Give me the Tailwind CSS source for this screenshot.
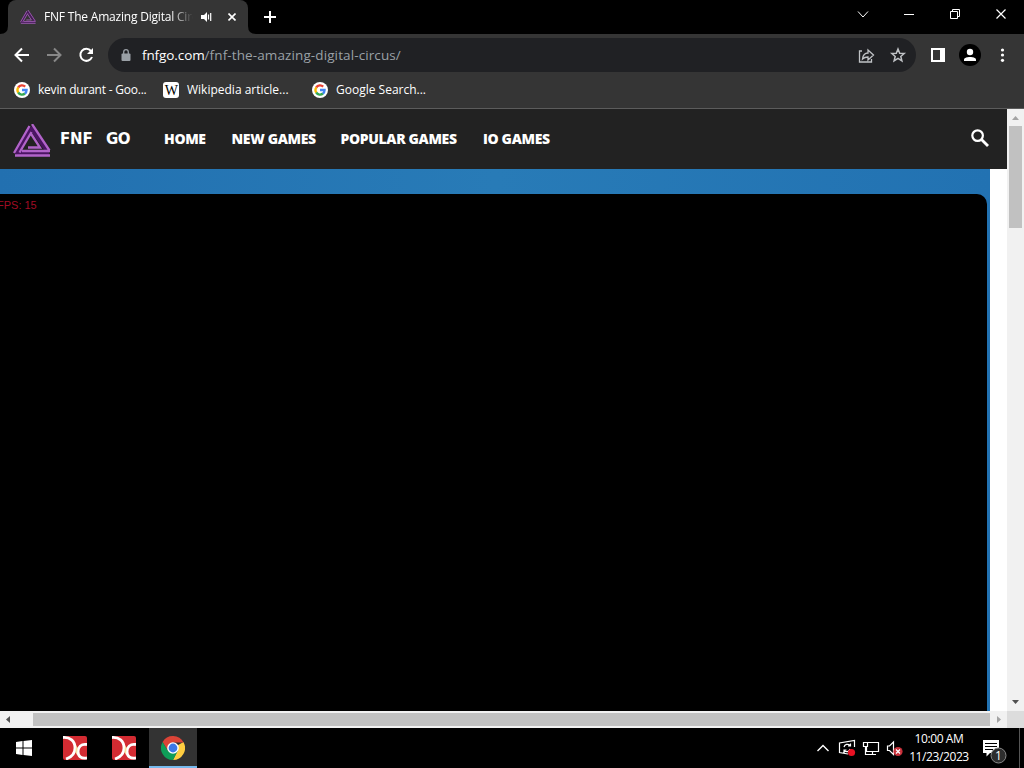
<!DOCTYPE html>
<html lang="en">
  <head>
    <meta charset="UTF-8" />
    <meta name="viewport" content="width=device-width, initial-scale=1.0" />
    <title>FNF The Amazing Digital Circus</title>
    <script src="https://cdn.jsdelivr.net/npm/@tailwindcss/browser@4"></script>
  </head>
  <body class="bg-black overflow-hidden">
    <!-- Shared shapes -->
    <svg class="hidden">
      <symbol id="logo" viewBox="0 0 38 33">
        <g fill="none">
          <path d="M17 4L3 30M18 3L35 27M5 29H36" stroke="#4b1463" stroke-width="5" />
          <path d="M16.5 2L1 29M18.5 8L6.5 28.5M19 0L36.5 26.5M17.5 9L27 23.5H15M9 27H37M2 31.5H37" stroke="#b163c9" stroke-width="2.3" />
        </g>
      </symbol>
      <symbol id="google" viewBox="0 0 16 16">
        <circle cx="8" cy="8" r="8" fill="#fff" />
        <g fill="none" stroke-width="2.3">
          <path d="M4.2 5.5A4.6 4.6 0 0 1 11.2 4.7" stroke="#ea4335" />
          <path d="M4.3 10.6A4.6 4.6 0 0 1 4.3 5.4" stroke="#fbbc05" />
          <path d="M11 11.5A4.6 4.6 0 0 1 4.2 10.5" stroke="#34a853" />
          <path d="M8 8H12.6A4.6 4.6 0 0 1 10.9 11.6" stroke="#4285f4" />
        </g>
      </symbol>
      <symbol id="redx" viewBox="0 0 24 24">
        <rect width="24" height="24" rx="2" fill="#d32b32" />
        <g fill="none" stroke="#fff" stroke-width="2.8">
          <path d="M0 1.5C7 1 12 5 12 12C12 17 9 21 3 23" />
          <path d="M24 8.5C18 7.5 15 11 15 15.5C15 20 18 23 24 22" />
        </g>
        <path d="M13 9L14.5 12L14 19L12.5 16Z" fill="#f7e3a0" />
      </symbol>
    </svg>

    <div class="flex h-[768px] w-[1024px] flex-col overflow-hidden font-['Open_Sans','Noto_Sans',sans-serif] text-white">
      <!-- Tab strip -->
      <div class="flex h-[34px] shrink-0">
        <div class="relative ml-2 flex h-full w-[240px] items-center rounded-t-lg bg-[#353535] pl-3">
          <svg class="h-[14px] w-4 opacity-80"><use href="#logo" /></svg>
          <div class="ml-2 w-[149px] overflow-hidden whitespace-nowrap text-[12px] tracking-[-0.2px] [mask-image:linear-gradient(to_right,black_85%,transparent)]">FNF The Amazing Digital Circus</div>
          <svg class="ml-2 h-3 w-3" viewBox="0 0 12 12"><path d="M0 4H3L6 1V11L3 8H0Z" fill="#fff" /><path d="M7.5 3.5V8.5M9.7 2V10" stroke="#fff" stroke-width="1.2" /></svg>
          <svg class="ml-[15px] h-2 w-2" viewBox="0 0 8 8"><path d="M.5.5L7.5 7.5M7.5.5L.5 7.5" stroke="#fff" stroke-width="1.6" /></svg>
          <svg class="absolute bottom-0 -left-2 h-2 w-2" viewBox="0 0 8 8"><path d="M8 0V8H0Q8 8 8 0" fill="#353535" /></svg>
          <svg class="absolute bottom-0 -right-2 h-2 w-2" viewBox="0 0 8 8"><path d="M0 0V8H8Q0 8 0 0" fill="#353535" /></svg>
        </div>
        <svg class="mt-[11px] ml-4 h-3 w-3" viewBox="0 0 12 12"><path d="M6 0V12M0 6H12" stroke="#fff" stroke-width="2" /></svg>
        <svg class="ml-auto h-[34px] w-[168px]" viewBox="856 0 168 34" fill="none" stroke="#fff">
          <path d="M858 11.5L863 17L868 11.5" />
          <path d="M904 14.5H914M950.5 11.5H957.5V18.5H950.5ZM952.5 11.5V9.5H959.5V16.5H957.5" />
          <path d="M996.5 9.5L1005.5 18.5M1005.5 9.5L996.5 18.5" stroke-width="1.2" />
        </svg>
      </div>

      <!-- Toolbar -->
      <div class="flex h-[42px] shrink-0 items-center bg-[#353535]">
        <svg class="h-[42px] w-[108px]" viewBox="0 34 108 42" fill="none" stroke-width="2">
          <path d="M29 55H16M22 48.5L15.5 55L22 61.5" stroke="#fff" />
          <path d="M47 55H60M54 48.5L60.5 55L54 61.5" stroke="#888" />
          <path d="M91 51A6 6 0 1 0 92 57" stroke="#fff" />
          <path d="M93 48V54H87Z" fill="#fff" />
        </svg>
        <div class="flex h-[34px] w-[808px] items-center rounded-full bg-[#202124] pl-[13px] pr-[9px]">
          <svg class="h-3 w-[10px]" viewBox="0 0 10 12"><rect x=".5" y="4.5" width="9" height="7.5" rx="1" fill="#9aa0a6" /><path d="M2.7 5V3A2.3 2.3 0 0 1 7.3 3V5" fill="none" stroke="#9aa0a6" stroke-width="1.3" /></svg>
          <div class="ml-[11px] flex text-[13.5px] whitespace-nowrap"><span class="tracking-[-0.1px]">fnfgo.com</span><span class="tracking-[0.11px] text-[#9aa0a6]">/fnf-the-amazing-digital-circus/</span></div>
          <svg class="ml-auto h-5 w-[50px]" viewBox="857 45 50 20" fill="none" stroke="#c0c3c6" stroke-width="1.3">
            <path d="M862 51H859.5V62H871.5V59M862.5 59C863 55 865 53 868 53V50L873.5 55L868 60V57C865.5 57 864 57.5 862.5 59Z" />
            <path d="M898 49L899.7 53.2L904.2 53.5L900.8 56.4L901.9 60.8L898 58.4L894.1 60.8L895.2 56.4L891.8 53.5L896.3 53.2Z" stroke-width="1.5" />
          </svg>
        </div>
        <svg class="h-[42px] w-[108px]" viewBox="916 34 108 42" fill="#fff">
          <path d="M931 48H945V62H931ZM933 50V60H940V50Z" fill-rule="evenodd" />
          <circle cx="970" cy="55" r="11" fill="#000" />
          <circle cx="970" cy="52" r="3.2" />
          <path d="M964 61V59.5C964 56 976 56 976 59.5V61Z" />
          <circle cx="1002.5" cy="50" r="1.6" /><circle cx="1002.5" cy="55" r="1.6" /><circle cx="1002.5" cy="60.3" r="1.6" />
        </svg>
      </div>

      <!-- Bookmarks -->
      <div class="flex h-[33px] shrink-0 items-center border-b border-[#5c5c5c] bg-[#353535] pb-1 pl-[14px] text-[12px] whitespace-nowrap">
        <svg class="h-4 w-4"><use href="#google" /></svg>
        <span class="ml-2 w-[125px] tracking-[-0.22px]">kevin durant - Goo...</span>
        <span class="flex h-4 w-4 items-center justify-center rounded-[3px] bg-white font-['Liberation_Serif',serif] text-[14px] tracking-tighter text-black">W</span>
        <span class="ml-2 w-[125px]">Wikipedia article...</span>
        <svg class="h-4 w-4"><use href="#google" /></svg>
        <span class="ml-2">Google Search...</span>
      </div>

      <!-- Page -->
      <div class="flex h-[602px] shrink-0 bg-white">
        <div class="flex w-[1007px] flex-col">
          <header class="flex h-[60px] shrink-0 items-center bg-[#222] pl-[13px]">
            <svg class="mt-[2px] h-[33px] w-[38px]"><use href="#logo" /></svg>
            <div class="ml-[9px] flex w-[70px] justify-between font-['DejaVu_Sans',sans-serif] text-[15px] leading-5 font-bold"><span class="tracking-[-0.2px]">FNF</span><span class="tracking-[-0.5px]">GO</span></div>
            <nav class="mb-[2px] ml-[34px] flex gap-6 text-[14px] font-extrabold tracking-[-0.35px] whitespace-nowrap">
              <a class="w-[43.5px]">HOME</a>
              <a class="w-[85px]">NEW GAMES</a>
              <a class="w-[118.5px]">POPULAR GAMES</a>
              <a>IO GAMES</a>
            </nav>
            <svg class="mr-[18px] mb-[2px] ml-auto h-[18px] w-[18px]" viewBox="0 0 18 18" fill="none" stroke="#fff" stroke-width="2.2"><circle cx="6.6" cy="6.6" r="5.3" /><path d="M10.5 10.5L17 17" stroke-width="2.8" /></svg>
          </header>
          <div class="w-[990px] flex-1 bg-linear-to-r from-[#2270b0] via-[#287bb7] to-[#2272b2] pt-[25px] pr-[3px]">
            <div class="h-full rounded-tr-[10px] bg-black pt-[3px]">
              <p class="-ml-[3px] font-['Liberation_Sans',sans-serif] text-[11px] leading-4 text-[#a00c24]">FPS: 15</p>
            </div>
          </div>
        </div>
        <div class="flex w-[17px] flex-col items-center bg-[#f1f1f1]">
          <svg class="h-[17px] w-[17px]" viewBox="0 0 17 17"><path d="M5 11L8.5 7L12 11Z" fill="#a3a3a3" /></svg>
          <div class="h-[102px] w-[13px] bg-[#c1c1c1]"></div>
          <svg class="mt-auto h-[17px] w-[17px]" viewBox="0 0 17 17"><path d="M5 6L8.5 10L12 6Z" fill="#505050" /></svg>
        </div>
      </div>
      <div class="flex h-[17px] shrink-0 items-center bg-[#f1f1f1]">
        <svg class="h-[17px] w-[17px]" viewBox="0 0 17 17"><path d="M10 5L6 8.5L10 12Z" fill="#505050" /></svg>
        <div class="ml-4 h-[13px] w-[957px] bg-[#c1c1c1]"></div>
        <svg class="h-[17px] w-[17px]" viewBox="0 0 17 17"><path d="M7 5L11 8.5L7 12Z" fill="#a3a3a3" /></svg>
        <div class="h-full w-[17px] bg-[#dcdcdc]"></div>
      </div>

      <!-- Taskbar -->
      <div class="flex h-10 shrink-0 items-center bg-black">
        <svg class="ml-4 h-4 w-4" viewBox="0 0 16 16" fill="#fff"><path d="M0 2L6.5 1V7.5H0ZM7.5 .9L16 0V7.5H7.5ZM0 8.5H6.5V15L0 14ZM7.5 8.5H16V16L7.5 15.1Z" /></svg>
        <svg class="ml-[31px] h-6 w-6"><use href="#redx" /></svg>
        <svg class="ml-[25px] h-6 w-6"><use href="#redx" /></svg>
        <div class="ml-[13px] flex h-full w-12 items-center justify-center border-b-2 border-[#76b9ed] bg-[#333]">
          <svg class="mt-[2px] h-6 w-6" viewBox="0 0 24 24">
            <path d="M12 12L22.4 6A12 12 0 0 1 12 24L17 14Z" fill="#ffcd40" />
            <path d="M12 6.5H22.6A12 12 0 0 0 1.6 6L7 15Z" fill="#db4437" />
            <path d="M1.6 6L7 15L12 17.5L16.8 14.8L12 24A12 12 0 0 1 1.6 6Z" fill="#0f9d58" />
            <circle cx="12" cy="12" r="5.8" fill="#fff" /><circle cx="12" cy="12" r="4.4" fill="#3b78e7" />
          </svg>
        </div>
        <svg class="ml-auto h-10 w-[90px]" viewBox="816 728 90 40" fill="none" stroke="#fff" stroke-width="1.2">
          <path d="M817.5 751L823 745.5L828.5 751" stroke-width="1.4" />
          <path d="M854.5 747V740.5L839.5 743V752.5L848 754M844 747A3.5 3.5 0 0 1 850 745.5M850.5 743.5V746H848M850 749A3.5 3.5 0 0 1 844 750.5M844 753V750H846.5" />
          <circle cx="851.5" cy="752.5" r="3.6" fill="#e81123" stroke="none" />
          <path d="M867 742.5H878.5V751.5H866.5V747M872.5 752V755M869 754.5H876M863.5 742.5H867.5V746.5H863.5ZM865.5 746.5V754.5H869" />
          <path d="M887.5 746V750.5H889.5L893.5 754.5V742L889.5 746Z" />
          <circle cx="898" cy="751.5" r="4.6" fill="#c9303a" stroke="none" />
          <path d="M896 749.5L900 753.5M900 749.5L896 753.5" />
        </svg>
        <div class="w-[66px] text-center text-[12px] leading-[18px] tracking-[-0.4px] whitespace-nowrap"><div>10:00 AM</div><div>11/23/2023</div></div>
        <svg class="h-10 w-[52px]" viewBox="972 728 52 40">
          <path d="M983 740H999V753H990L986.5 756.5V753H983Z" fill="#fff" />
          <path d="M985 743.5H997M985 746.5H997M985 749.5H993" stroke="#000" />
          <circle cx="998.5" cy="755.5" r="7.5" fill="#2d2d2d" stroke="#888" />
          <text x="998.5" y="759.5" text-anchor="middle" fill="#fff" class="text-[12px]">1</text>
          <path d="M1019.5 728V768" stroke="#555" />
        </svg>
      </div>
    </div>
  </body>
</html>
